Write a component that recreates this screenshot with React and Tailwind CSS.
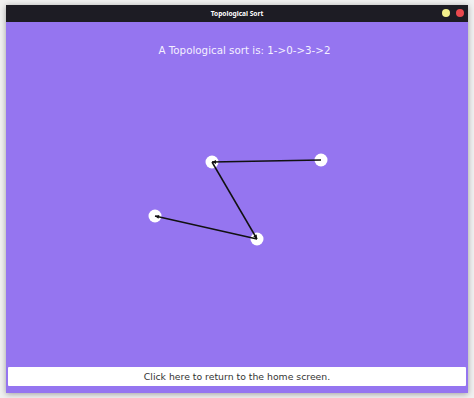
import React from 'react';

const nodes = [
  { id: 0, x: 212, y: 162 },
  { id: 1, x: 321, y: 160 },
  { id: 2, x: 155, y: 216 },
  { id: 3, x: 257, y: 239 },
];

// edges as [from, to]
const edges = [
  [1, 0],
  [0, 3],
  [3, 2],
];

const OX = 6;
const OY = 22;

const Arrow = ({ from, to }) => {
  const a = nodes[from];
  const b = nodes[to];
  const ang = Math.atan2(b.y - a.y, b.x - a.x);
  const len = 4;
  const w = 2;
  const bx = b.x - OX;
  const by = b.y - OY;
  const p1x = bx - len * Math.cos(ang) + w * Math.sin(ang);
  const p1y = by - len * Math.sin(ang) - w * Math.cos(ang);
  const p2x = bx - len * Math.cos(ang) - w * Math.sin(ang);
  const p2y = by - len * Math.sin(ang) + w * Math.cos(ang);
  return (
    <g>
      <line x1={a.x - OX} y1={a.y - OY} x2={bx} y2={by} stroke="#111" strokeWidth="1.5" />
      <polygon points={`${bx},${by} ${p1x},${p1y} ${p2x},${p2y}`} fill="#111" />
    </g>
  );
};

export default function App() {
  return (
    <div className="w-[474px] h-[398px] bg-[#f1f1f1] pt-[5px] px-[6px]">
      <div className="w-[462px] h-[388px] flex flex-col shadow-[0_1px_6px_rgba(0,0,0,0.35)]">
        <div className="h-[17px] bg-[#1d1c24] flex items-center justify-center relative">
          <span className="text-white text-[6.6px] font-bold" style={{ fontFamily: '"Noto Sans", sans-serif' }}>
            Topological Sort
          </span>
          <div className="absolute right-[4px] top-[4px] flex gap-[6px]">
            <div className="w-[8px] h-[8px] rounded-full bg-[#f2ef8c]" />
            <div className="w-[8px] h-[8px] rounded-full bg-[#e9484e]" />
          </div>
        </div>
        <div className="flex-1 bg-[#9575f0] relative flex flex-col" style={{ fontFamily: '"DejaVu Sans", sans-serif' }}>
          <svg className="absolute inset-0" width="462" height="371">
            {nodes.map((n) => (
              <circle key={n.id} cx={n.x - OX} cy={n.y - OY} r="6.5" fill="#ffffff" />
            ))}
            {edges.map(([f, t]) => (
              <Arrow key={`${f}-${t}`} from={f} to={t} />
            ))}
          </svg>
          <div className="relative pt-[21px] pl-[15px] text-center text-[10.3px] leading-[14px] text-[#f4f0ff]">
            A Topological sort is: 1-&gt;0-&gt;3-&gt;2
          </div>
          <div className="flex-1" />
          <div className="relative mx-[2px] mb-[7px] h-[19px] bg-white rounded-[1px] flex items-center justify-center text-[9.3px] text-[#333]">
            Click here to return to the home screen.
          </div>
        </div>
      </div>
    </div>
  );
}
